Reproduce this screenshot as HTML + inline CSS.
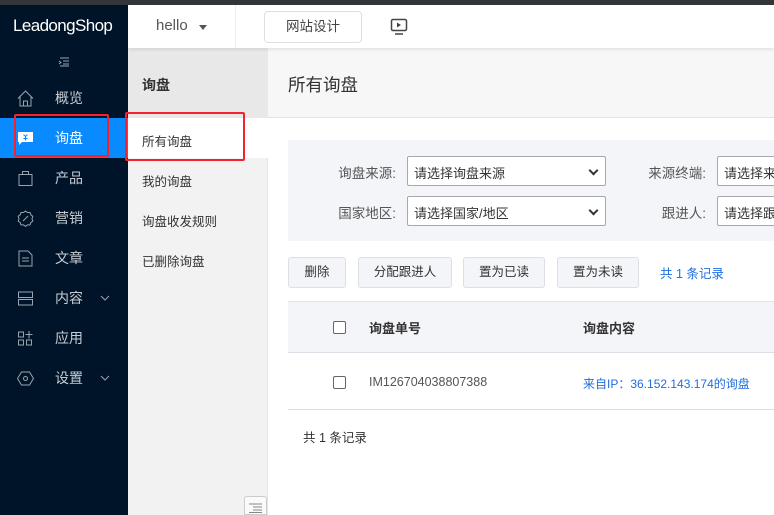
<!DOCTYPE html>
<html><head><meta charset="utf-8"><style>
*{margin:0;padding:0;box-sizing:border-box}
body{width:774px;height:515px;overflow:hidden;position:relative;font-family:"Liberation Sans","Noto Sans CJK SC",sans-serif;background:#fff;color:#333}
.a{position:absolute}
.side{left:0;top:5px;width:128px;height:510px;background:#001429}
.item{position:absolute;left:0;width:128px;height:40px;color:#c8ccd2;font-size:14px}
.item span{position:absolute;left:55px;top:10px}
.item svg{position:absolute;left:17px;top:12px}
.sel{border:1px solid #a5a8b0;background:#fff;height:30px;font-size:13px;color:#333;padding:6px 0 0 6px;border-radius:2px;white-space:nowrap;overflow:hidden}
.sel:after{content:"";position:absolute;right:8px;top:10px;width:5px;height:5px;border-right:2px solid #333;border-bottom:2px solid #333;transform:rotate(45deg)}
.lab{font-size:13.5px;color:#555;text-align:right;width:90px}
.btn{top:257px;height:31px;border:1px solid #dcdfe6;background:#f4f5f9;border-radius:3px;font-size:12.5px;color:#333;text-align:center;line-height:29px}
.cb{width:13px;height:13px;border:1px solid #666;border-radius:2px;background:#fff}
.red{border:2px solid #f5222d;border-radius:2px}
</style></head><body>
<div class="a" style="left:0;top:0;width:774px;height:5px;background:#333639"></div>
<div class="a side"></div>
<div class="a" style="left:13px;top:16px;color:#fff;font-size:17px;letter-spacing:-0.6px">LeadongShop</div>
<svg class="a" style="left:58px;top:57px" width="12" height="10"><path d="M2 1h9M5 4h6M5 7h6M2 9h9M1 4l2 1.5-2 1.5" stroke="#9aa3ad" fill="none"/></svg>
<div class="item" style="top:78px"><svg width="17" height="17"><path d="M1 8.5L8.5 1l7.5 7.5M3 6.5V16h11V6.5M6.5 16v-5h4v5" stroke="#9aa3ad" fill="none"/></svg><span>概览</span></div>
<div class="item" style="top:118px;background:#0a8aff;color:#fff"><svg width="17" height="17"><path d="M1 2h15v10H5l-3 3v-3H1z" fill="#fff"/><path d="M6.5 4.5l2 2 2-2M8.5 6.5v4M6.5 8.5h4" stroke="#0a8aff" fill="none"/></svg><span>询盘</span></div>
<div class="item" style="top:158px"><svg width="17" height="17"><path d="M2 4.5h13v11H2zM5.5 4.5V1.5h6v3" stroke="#9aa3ad" fill="none"/></svg><span>产品</span></div>
<div class="item" style="top:198px"><svg width="17" height="17"><path d="M8.5 1l2 1.5 2.5 0 .8 2.3 2 1.5-.8 2.4.8 2.4-2 1.5-.8 2.3-2.5 0-2 1.5-2-1.5-2.5 0-.8-2.3-2-1.5.8-2.4-.8-2.4 2-1.5.8-2.3 2.5 0z" stroke="#9aa3ad" fill="none"/><path d="M6 11l5-5" stroke="#9aa3ad"/></svg><span>营销</span></div>
<div class="item" style="top:238px"><svg width="17" height="17"><path d="M2 1h9l4 4v11H2zM5 8h7M5 11h7" stroke="#9aa3ad" fill="none"/></svg><span>文章</span></div>
<div class="item" style="top:278px"><svg width="17" height="17"><path d="M1.5 2h14v5.5h-14zM1.5 9.5h14V15h-14z" stroke="#9aa3ad" fill="none"/></svg><span>内容</span><svg style="left:100px;top:17px" width="10" height="7"><path d="M1 1l4 4 4-4" stroke="#9aa3ad" fill="none"/></svg></div>
<div class="item" style="top:318px"><svg width="17" height="17"><path d="M1.5 2h5v5h-5zM1.5 10h5v5h-5zM9.5 10h5v5h-5zM12 1v7.5M8.5 4.5h7" stroke="#9aa3ad" fill="none"/></svg><span>应用</span></div>
<div class="item" style="top:358px"><svg width="17" height="17"><path d="M4.5 2h8l4 6.5-4 6.5h-8l-4-6.5z" stroke="#9aa3ad" fill="none"/><circle cx="8.5" cy="8.5" r="2" stroke="#9aa3ad" fill="none"/></svg><span>设置</span><svg style="left:100px;top:17px" width="10" height="7"><path d="M1 1l4 4 4-4" stroke="#9aa3ad" fill="none"/></svg></div>
<div class="a red" style="left:14px;top:114px;width:95px;height:43px"></div>
<div class="a" style="left:128px;top:5px;width:646px;height:43px;background:#fff;box-shadow:0 2px 3px rgba(0,0,0,.08);z-index:2">
<div class="a" style="left:28px;top:12px;font-size:15px;color:#555">hello</div>
<div class="a" style="left:71px;top:20px;width:0;height:0;border-left:4px solid transparent;border-right:4px solid transparent;border-top:5px solid #555"></div>
<div class="a" style="left:107px;top:0;width:1px;height:43px;background:#eee"></div>
<div class="a" style="left:136px;top:6px;width:98px;height:32px;border:1px solid #dcdfe6;border-radius:4px;font-size:13.5px;color:#444;text-align:center;line-height:30px">网站设计</div>
<svg class="a" style="left:262px;top:13px" width="18" height="18"><rect x="1.5" y="1.5" width="15" height="11" rx="1.5" stroke="#444" stroke-width="1.5" fill="none"/><path d="M7 4.5v5l4-2.5z" fill="#444"/><path d="M5 16h8" stroke="#444" stroke-width="1.5"/></svg>
</div>
<div class="a" style="left:128px;top:48px;width:140px;height:467px;background:#f2f2f2;border-right:1px solid #e4e4e4"></div>
<div class="a" style="left:128px;top:48px;width:140px;height:70px;background:#e8e8e8"></div>
<div class="a" style="left:142px;top:75px;font-size:14px;font-weight:bold;color:#333">询盘</div>
<div class="a" style="left:128px;top:118px;width:140px;height:40px;background:#fff"></div>
<div class="a" style="left:142px;top:131px;font-size:12.5px">所有询盘</div>
<div class="a" style="left:142px;top:171px;font-size:12.5px">我的询盘</div>
<div class="a" style="left:142px;top:211px;font-size:12.5px">询盘收发规则</div>
<div class="a" style="left:142px;top:251px;font-size:12.5px">已删除询盘</div>
<div class="a red" style="left:125px;top:112px;width:120px;height:49px"></div>
<div class="a" style="left:244px;top:496px;width:23px;height:19px;border:1px solid #ccc;background:#fafafa;border-radius:3px 3px 0 0"></div>
<svg class="a" style="left:248px;top:503px" width="15" height="10"><path d="M1 1h13M5 4h9M5 7h9M1 9.5h13" stroke="#888"/></svg>
<div class="a" style="left:268px;top:48px;width:506px;height:70px;background:#f7f7f7;border-bottom:1px solid #e4e4e4"></div>
<div class="a" style="left:288px;top:72px;font-size:17.5px;color:#333">所有询盘</div>
<div class="a" style="left:288px;top:140px;width:486px;height:101px;background:#f4f5f9"></div>
<div class="a lab" style="left:306px;top:162px">询盘来源:</div>
<div class="a sel" style="left:407px;top:156px;width:199px">请选择询盘来源</div>
<div class="a lab" style="left:616px;top:162px">来源终端:</div>
<div class="a sel" style="left:717px;top:156px;width:80px">请选择来源终端</div>
<div class="a lab" style="left:306px;top:202px">国家地区:</div>
<div class="a sel" style="left:407px;top:196px;width:199px">请选择国家/地区</div>
<div class="a lab" style="left:616px;top:202px">跟进人:</div>
<div class="a sel" style="left:717px;top:196px;width:80px">请选择跟进人</div>
<div class="a btn" style="left:288px;width:58px">删除</div>
<div class="a btn" style="left:358px;width:94px">分配跟进人</div>
<div class="a btn" style="left:463px;width:82px">置为已读</div>
<div class="a btn" style="left:557px;width:82px">置为未读</div>
<div class="a" style="left:660px;top:263px;font-size:12.5px;color:#1f6fe0">共 1 条记录</div>
<div class="a" style="left:288px;top:301px;width:486px;height:52px;background:#f4f5f9;border-top:1px solid #e4e6eb;border-bottom:1px solid #dcdfe6"></div>
<div class="a cb" style="left:333px;top:321px"></div>
<div class="a" style="left:369px;top:318px;font-size:13px;font-weight:bold">询盘单号</div>
<div class="a" style="left:583px;top:318px;font-size:13px;font-weight:bold">询盘内容</div>
<div class="a cb" style="left:333px;top:376px"></div>
<div class="a" style="left:369px;top:375px;font-size:12.5px;color:#555">IM126704038807388</div>
<div class="a" style="left:583px;top:375px;font-size:12px;color:#1f6fe0">来自IP：36.152.143.174的询盘</div>
<div class="a" style="left:288px;top:409px;width:486px;height:1px;background:#dcdfe6"></div>
<div class="a" style="left:303px;top:427px;font-size:12.5px">共 1 条记录</div>
</body></html>
